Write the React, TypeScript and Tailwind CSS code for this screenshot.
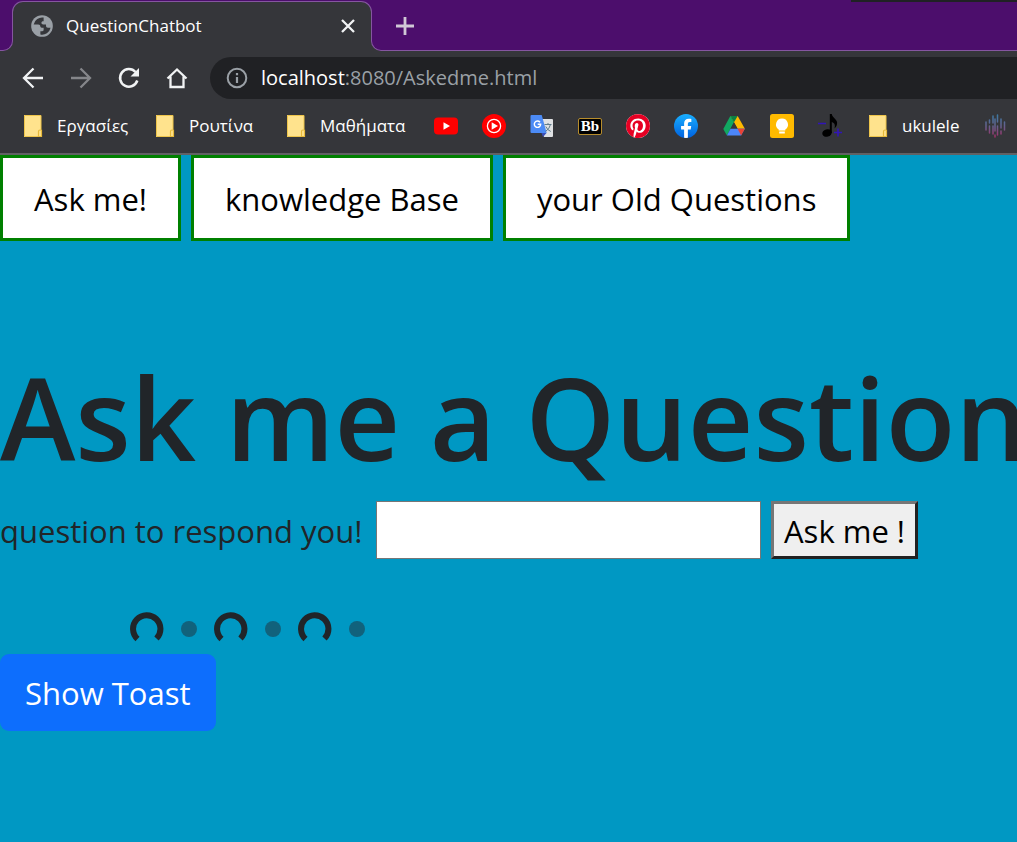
import type { ReactNode } from "react";

function Folder() {
  return (
    <svg viewBox="0 0 24 24" className="size-6 shrink-0" aria-hidden="true">
      <path d="M3 1h17v15h1v7H3z" fill="#ffe38d" />
      <path d="M3.500 1.500h16.500v14M3.500 1.500v21H18" fill="none" stroke="#eec54b" strokeWidth="1" />
      <path d="M17.500 22.500v-5q0-1.500 1.500-1.500h1.500v6.500z" fill="#ffe38d" stroke="#e6b93a" strokeWidth="1.200" />
    </svg>
  );
}

function Globe() {
  return (
    <svg viewBox="0 0 24 24" className="size-[26px] shrink-0" aria-hidden="true">
      <circle cx="12" cy="12" r="10" fill="#9aa0a6" />
      <path
        d="M13.500 4.200A8 8 0 0 0 4.300 10.500h4.200c1.300 0 2 .8 2 2 0 .7.500 1 1.200 1h1.800v2.300c0 .7-.5 1-1.200 1h-1.800v3a8 8 0 0 0 9.400-6.300h-2.400c-1.200 0-1.800-.7-1.800-1.800V10.500h-2.500c-1.200 0-1.700-.7-1.700-1.600s.6-1.400 1.500-1.400h.5z"
        fill="#35363a"
      />
    </svg>
  );
}

function YouTube() {
  return (
    <svg viewBox="0 0 24 24" className="size-6">
      <rect y="3.500" width="24" height="17" rx="4" fill="#f00" />
      <path d="M9.500 8.200v7.600l6.500-3.800z" fill="#fff" />
    </svg>
  );
}

function YouTubeMusic() {
  return (
    <svg viewBox="0 0 24 24" className="size-6">
      <circle cx="12" cy="12" r="12" fill="#f00" />
      <circle cx="12" cy="12" r="6.600" fill="none" stroke="#fff" strokeWidth="1.300" />
      <path d="M9.700 8.300v7.400l6.300-3.700z" fill="#fff" />
    </svg>
  );
}

function Translate() {
  return (
    <svg viewBox="0 0 24 24" className="size-6">
      <path d="M9 5h13q1 0 1 1v16q0 1-1 1h-8z" fill="#dfe1e3" />
      <path d="M11.500 19h5l-3.500 4z" fill="#3a4fb8" />
      <path d="M1.500 1h10.200l5 18H1.500Q.5 19 .5 18V2q0-1 1-1z" fill="#4c8bf5" />
      <path d="M10 8.200a3.200 3.200 0 1 0 .7 2.100H7.700" fill="none" stroke="#fff" strokeWidth="1.400" />
      <path d="M14.500 10.500h7M18 9v1.500M20.500 10.500q-1 4.500-5 7M15.800 12.500q1.500 3.500 5 5" fill="none" stroke="#607d8b" strokeWidth="1" />
    </svg>
  );
}

function Blackboard() {
  return (
    <span className="flex h-[17px] w-6 items-center justify-center rounded-xs border border-[#b78d2c] bg-black font-['Liberation_Serif',serif] text-[15px] leading-none font-bold text-white">
      Bb
    </span>
  );
}

function Pinterest() {
  return (
    <svg viewBox="0 0 24 24" className="size-6">
      <circle cx="12" cy="12" r="12" fill="#fff" />
      <path
        fill="#e60023"
        d="M12.017 0C5.396 0 .029 5.367.029 11.987c0 5.079 3.158 9.417 7.618 11.162-.105-.949-.199-2.403.041-3.439.219-.937 1.406-5.957 1.406-5.957s-.359-.72-.359-1.781c0-1.663.967-2.911 2.168-2.911 1.024 0 1.518.769 1.518 1.688 0 1.029-.653 2.567-.992 3.992-.285 1.193.6 2.165 1.775 2.165 2.128 0 3.768-2.245 3.768-5.487 0-2.861-2.063-4.869-5.008-4.869-3.410 0-5.409 2.562-5.409 5.199 0 1.033.394 2.143.889 2.741.099.120.112.225.085.345-.090.375-.293 1.199-.334 1.363-.053.225-.172.271-.401.165-1.495-.690-2.433-2.878-2.433-4.646 0-3.776 2.748-7.252 7.920-7.252 4.158 0 7.392 2.967 7.392 6.923 0 4.135-2.607 7.462-6.233 7.462-1.214 0-2.354-.629-2.758-1.379l-.749 2.848c-.269 1.045-1.004 2.352-1.498 3.146 1.123.345 2.306.535 3.550.535 6.607 0 11.985-5.365 11.985-11.987C23.970 5.390 18.592.026 11.985.026z"
      />
    </svg>
  );
}

function Facebook() {
  return (
    <svg viewBox="0 0 24 24" className="size-6">
      <defs>
        <linearGradient id="fb" x1="0" y1="0" x2="0" y2="1">
          <stop offset="0" stopColor="#19afff" />
          <stop offset="1" stopColor="#0062e0" />
        </linearGradient>
      </defs>
      <circle cx="12" cy="12" r="12" fill="url(#fb)" />
      <path d="M16.670 15.470l.530-3.470h-3.330V9.750c0-.950.470-1.870 1.960-1.870h1.510V4.930s-1.370-.240-2.690-.240c-2.740 0-4.530 1.660-4.530 4.670V12H7.080v3.470h3.040V23.850a12 12 0 0 0 3.750 0v-8.380z" fill="#fff" />
    </svg>
  );
}

function Drive() {
  return (
    <svg viewBox="0 0 24 24" className="size-6">
      <path d="M8.300 2h7.400l7.200 12.800h-7.300z" fill="#ffba00" />
      <path d="M8.300 2L12 8.300 4.900 21.500 1.300 15z" fill="#11a861" />
      <path d="M8.300 2h7.400L12 8.300z" fill="#0b8043" />
      <path d="M12 8.300l3.600 6.500H8.500z" fill="#35363a" />
      <path d="M8.500 14.800h14.300l-3.700 6.700H4.900z" fill="#4c86f9" />
      <path d="M15.600 14.800h7.200l-3.700 6.700z" fill="#ea4335" />
    </svg>
  );
}

function Keep() {
  return (
    <svg viewBox="0 0 24 24" className="size-6">
      <rect width="24" height="24" rx="2.500" fill="#ffba00" />
      <path d="M12 4.500a6 6 0 0 0-3.300 11v1h6.600v-1A6 6 0 0 0 12 4.500zM9.200 17.500h5.600v2H9.200z" fill="#fff" />
    </svg>
  );
}

function MusicNote() {
  return (
    <svg viewBox="0 0 24 24" className="size-6">
      <ellipse cx="9" cy="19" rx="4.800" ry="3.700" transform="rotate(-15 9 19)" />
      <path d="M11.800 0h2c.3 3.500 5 5 5.300 8.500.2 2.500-1 4.500-2.600 6 .9-3.500.2-5.500-2.700-6.500V19h-2z" />
      <path d="M0 9.500h8M16 18.500h8M20 14.500v8" stroke="#3115b8" strokeWidth="1.600" />
    </svg>
  );
}

function SoundBars() {
  return (
    <svg viewBox="0 0 24 24" className="size-6 shrink-0">
      <defs>
        <linearGradient id="bars" x1="0" y1="0" x2="0" y2="24" gradientUnits="userSpaceOnUse">
          <stop offset="0" stopColor="#397ca5" />
          <stop offset=".5" stopColor="#65618e" />
          <stop offset="1" stopColor="#a52b66" />
        </linearGradient>
      </defs>
      <path
        d="M3 8v8M6.500 6v3M6.500 12v7M10 2v7M10 12v8M12 5v12M12 21v2M14.500 1v7M14.500 12v9M18 5v9M18 17v3M21.500 8v8"
        stroke="url(#bars)"
        strokeWidth="1.500"
        strokeLinecap="round"
      />
    </svg>
  );
}

function IconButton({ label, children }: { label: string; children: ReactNode }) {
  return (
    <button aria-label={label} className="flex size-6 shrink-0 items-center justify-center">
      <svg viewBox="0 0 24 24" className="size-6" fill="none" stroke="#f1f3f4" strokeWidth="2">
        {children}
      </svg>
    </button>
  );
}

function FolderLink({ children, width }: { children: string; width: string }) {
  return (
    <a href="#" className={`flex shrink-0 items-center gap-3 whitespace-nowrap ${width}`}>
      <Folder />
      {children}
    </a>
  );
}

const shortcuts = [
  { name: "YouTube", icon: <YouTube /> },
  { name: "YouTube Music", icon: <YouTubeMusic /> },
  { name: "Translate", icon: <Translate /> },
  { name: "Blackboard", icon: <Blackboard /> },
  { name: "Pinterest", icon: <Pinterest /> },
  { name: "Facebook", icon: <Facebook /> },
  { name: "Drive", icon: <Drive /> },
  { name: "Keep", icon: <Keep /> },
  { name: "Transpose", icon: <MusicNote /> },
];

function TabStrip() {
  return (
    <div className="relative flex h-[51px]">
      <div className="flex w-[13px] shrink-0 flex-col">
        <div className="h-6 bg-[#4c0e6c]" />
        <div className="grow rounded-br-[10px] border-r border-b border-[#8556a0] bg-[#4c0e6c]" />
      </div>
      <div className="relative -ml-px flex w-[360px] shrink-0 items-center pr-3 pl-[17px]">
        <div className="absolute inset-x-0 top-0 h-6 bg-[#4c0e6c]">
          <div className="mt-px h-full rounded-t-[11px] border-x border-t border-[#8556a0] bg-[#35363a]" />
        </div>
        <div className="relative flex grow items-center gap-[11px]">
          <Globe />
          <span className="grow text-[17px] text-white">QuestionChatbot</span>
          <IconButton label="Close tab">
            <path d="M6 6l12 12M18 6L6 18" strokeWidth="2.300" />
          </IconButton>
        </div>
      </div>
      <div className="-ml-px flex grow flex-col">
        <div className="h-6 bg-[#4c0e6c]" />
        <div className="grow rounded-bl-[10px] border-b border-l border-[#8556a0] bg-[#4c0e6c]" />
      </div>
      <button aria-label="New tab" className="absolute top-[14px] left-[393px]">
        <svg viewBox="0 0 24 24" className="size-6" stroke="#d0c8d6" strokeWidth="2.800">
          <path d="M3 12h18M12 3v18" />
        </svg>
      </button>
      <div className="absolute top-0 right-0 h-0.5 w-[166px] bg-[#202124]" />
    </div>
  );
}

function Toolbar() {
  return (
    <div className="flex h-[54px] items-center gap-6 pl-[21px]">
      <IconButton label="Back">
        <path d="M22 12H3M12.500 2.500L3 12l9.500 9.500" strokeWidth="2.300" />
      </IconButton>
      <button aria-label="Forward" disabled className="size-6 shrink-0">
        <svg viewBox="0 0 24 24" className="size-6" fill="none" stroke="#85868a" strokeWidth="2.300">
          <path d="M2 12h19M11.500 2.500L21 12l-9.500 9.500" />
        </svg>
      </button>
      <IconButton label="Reload">
        <path d="M20.300 14.500A8.800 8.800 0 1 1 18.500 6" strokeWidth="2.500" />
        <path d="M22 2v8.500h-8.500z" fill="#f1f3f4" stroke="none" />
      </IconButton>
      <IconButton label="Home">
        <path d="M2.500 12.500L12 3.500l9.500 9M5.500 10.500V21h13V10.500" strokeWidth="2.300" />
      </IconButton>
      <div className="-ml-[3px] flex h-[42px] grow items-center gap-3 rounded-l-full bg-[#202124] pl-[15px]">
        <svg viewBox="0 0 24 24" className="size-6 shrink-0" fill="none" stroke="#9aa0a6" strokeWidth="2">
          <circle cx="12" cy="12" r="9.300" />
          <path d="M12 11v6M12 7v2.200" strokeWidth="2.200" />
        </svg>
        <span className="text-[20px] whitespace-nowrap text-[#9aa0a6]">
          <span className="text-white">localhost</span>:8080/Askedme.html
        </span>
      </div>
    </div>
  );
}

function Bookmarks() {
  return (
    <div className="flex h-[50px] items-center overflow-hidden border-b-2 border-[#606164] pb-[6px] pl-[21px] text-[17px] text-white">
      <FolderLink width="min-w-[132px]">Εργασίες</FolderLink>
      <FolderLink width="min-w-[131px]">Ρουτίνα</FolderLink>
      <FolderLink width="min-w-[150px]">Μαθήματα</FolderLink>
      {shortcuts.map((s) => (
        <a key={s.name} href="#" aria-label={s.name} className="mr-6 flex size-6 shrink-0 items-center">
          {s.icon}
        </a>
      ))}
      <FolderLink width="min-w-[117px]">ukulele</FolderLink>
      <a href="#" aria-label="Sound" className="shrink-0">
        <SoundBars />
      </a>
    </div>
  );
}

function Spinner() {
  return (
    <svg viewBox="0 0 34 34" className="size-[34px]" fill="none">
      <path d="M7.500 27A13.700 13.700 0 1 1 26.500 26.500" stroke="#212529" strokeWidth="6" />
    </svg>
  );
}

export default function App() {
  return (
    <div className="min-h-screen overflow-hidden bg-[#0098c3] font-['Open_Sans','Noto_Sans',sans-serif]">
      <header className="bg-[#35363a]">
        <TabStrip />
        <Toolbar />
        <Bookmarks />
      </header>
      <main className="text-[31px] text-[#212529]">
        <nav className="flex gap-[10px] whitespace-nowrap text-black">
          {["Ask me!", "knowledge Base", "your Old Questions"].map((label) => (
            <button key={label} className="h-[86px] border-3 border-[#008000] bg-white px-[31px] pt-[2px]">
              {label}
            </button>
          ))}
        </nav>
        <h1 className="mt-[103px] text-[114px] leading-[146px] font-semibold whitespace-nowrap">
          Ask me a Question
        </h1>
        <form className="mt-[11px] flex items-center gap-[10px] whitespace-nowrap" onSubmit={(e) => e.preventDefault()}>
          <label htmlFor="question" className="min-w-[366px] pt-[2px]">
            question to respond you!
          </label>
          <input id="question" type="text" className="h-[58px] w-[385px] border border-[#767676] bg-white px-2 text-black" />
          <button className="h-[58px] border-3 border-t-[#767676] border-r-[#212121] border-b-[#212121] border-l-[#767676] bg-[#efefef] px-[10px] pt-[2px] text-black">
            Ask me !
          </button>
        </form>
        <div className="mt-[53px] flex items-center gap-[17px] pl-[130px]">
          {[0, 1, 2].map((i) => (
            <div key={i} className="flex items-center gap-[17px]" role="status">
              <Spinner />
              <span className="size-4 rounded-full bg-[#11627c]" />
            </div>
          ))}
        </div>
        <button className="mt-2 h-[77px] rounded-[9px] bg-[#0d6efd] px-[25px] pt-[2px] text-white">Show Toast</button>
      </main>
    </div>
  );
}
